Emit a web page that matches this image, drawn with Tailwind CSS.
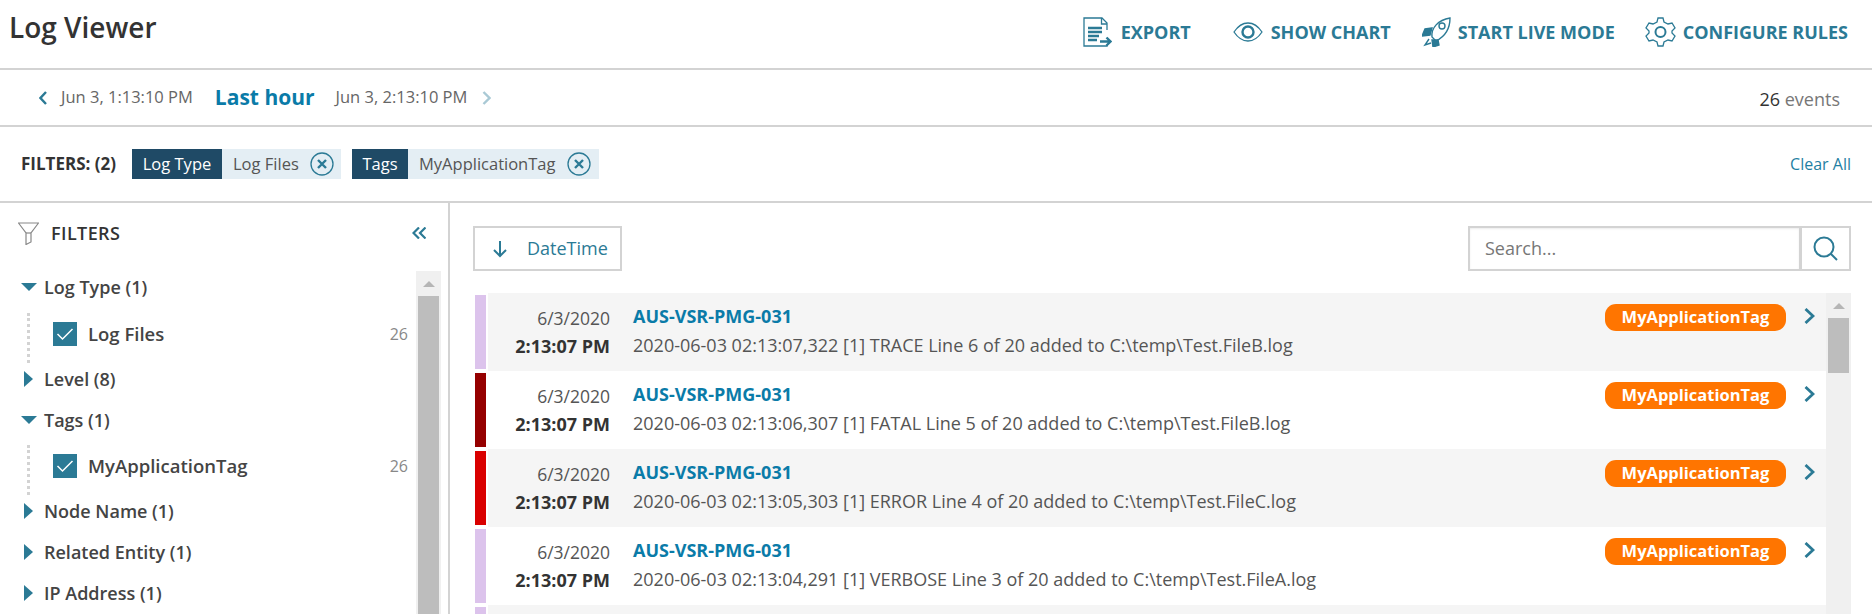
<!DOCTYPE html>
<html lang="en">
<head>
<meta charset="UTF-8">
<title>Log Viewer</title>
<script src="https://cdn.jsdelivr.net/npm/@tailwindcss/browser@4"></script>
</head>
<body class="bg-white font-['Open_Sans',sans-serif] text-[#333] h-[614px] w-[1872px] overflow-hidden">

<!-- Title bar -->
<header class="h-[70px] border-b-2 border-[#d3d3d3] flex justify-between pl-[9px] pr-[24px]">
  <h1 class="text-[28px] leading-[36px] mt-[9px] font-semibold text-[#333]">Log Viewer</h1>
  <nav class="flex items-start pt-[17px] text-[#2b7a95] text-[18px] font-bold leading-[30px]">
    <a class="flex items-center whitespace-nowrap">
      <svg class="w-[29px] h-[30px] mr-[9px]" viewBox="0 0 29 30" fill="none" stroke="#2b7a95" stroke-width="1.300"><path d="M24 13V6l-5-5H1v28h23v-1"/><path d="M18.500 1v6h5.500"/><path d="M5 11h14M5 15h14M5 19h11M5 23h9" stroke-width="2.400"/><path d="M17 24.500h10M23.500 20.500l4 4-4 4" stroke-width="2.400"/></svg>
      EXPORT</a>
    <a class="flex items-center ml-[42px] whitespace-nowrap">
      <svg class="w-[30px] h-[30px] mr-[8px]" viewBox="0 0 30 30" fill="none" stroke="#2b7a95" stroke-width="1.300"><path d="M1 15c4-6 8-9 14-9s10 3 14 9c-4 6-8 9-14 9S5 21 1 15z"/><circle cx="15" cy="15" r="5.500" stroke-width="2.400"/></svg>
      SHOW CHART</a>
    <a class="flex items-center ml-[31px] whitespace-nowrap">
      <svg class="w-[29px] h-[30px] mr-[7px]" viewBox="0 0 29 30" fill="none" stroke="#2b7a95" stroke-width="1.400"><path d="M10 20C9 11 16 3 28 1c0 11-6 19-14 23z"/><circle cx="20" cy="9" r="3"/><path d="M10 11l-7 1-3 7 8-1z" fill="#2b7a95"/><path d="M16 23l1 5-6 2-1-7z" fill="#2b7a95"/><path d="M7 22l-4 6 6-2"/></svg>
      START LIVE MODE</a>
    <a class="flex items-center ml-[30px] whitespace-nowrap">
      <svg class="w-[31px] h-[30px] mr-[7px]" viewBox="0 0 31 30" fill="none" stroke="#2b7a95" stroke-width="1.300"><path d="M13 1h5l1 4 4 2 4-1 3 5-3 3v2l3 3-3 5-4-1-4 2-1 4h-5l-1-4-4-2-4 1-3-5 3-3v-2L1 11l3-5 4 1 4-2z"/><circle cx="15.500" cy="15" r="5" stroke-width="2"/></svg>
      CONFIGURE RULES</a>
  </nav>
</header>

<!-- Time range -->
<div class="h-[57px] border-b-2 border-[#d3d3d3] flex items-center pl-[39px] pr-[32px] whitespace-nowrap">
  <svg class="w-[8px] h-[14px] mr-[14px]" viewBox="0 0 8 14" fill="none" stroke="#2b7a95" stroke-width="2.400"><path d="M7 1L1.500 7 7 13"/></svg>
  <span class="text-[16.500px] text-[#666]">Jun 3, 1:13:10 PM</span>
  <span class="text-[21px] font-bold text-[#0a7ba8] ml-[22px]">Last hour</span>
  <span class="text-[16.500px] text-[#666] ml-[21px]">Jun 3, 2:13:10 PM</span>
  <svg class="w-[9px] h-[14px] ml-[15px]" viewBox="0 0 9 14" fill="none" stroke="#a9c9d5" stroke-width="2.400"><path d="M1.500 1L7.500 7l-6 6"/></svg>
  <span class="ml-auto mt-[3px] text-[18px] text-[#777]"><span class="text-[#333]">26</span> events</span>
</div>

<!-- Active filters -->
<div class="h-[76px] border-b-2 border-[#d3d3d3] flex items-center pl-[21px] pr-[21px] text-[16.500px] whitespace-nowrap">
  <span class="font-bold text-[17px] text-[#333] w-[111px]">FILTERS: (2)</span>
  <div class="flex h-[30px] items-center bg-[#e4eef4] w-[209px]">
    <span class="bg-[#1f4a66] text-white h-full w-[90px] text-center leading-[30px]">Log Type</span>
    <span class="text-[#555] ml-[11px] w-[77px]">Log Files</span>
    <svg class="w-[24px] h-[24px]" viewBox="0 0 24 24" fill="none" stroke="#2b7a95"><circle cx="12" cy="12" r="11" stroke-width="1.300"/><path d="M8 8l8 8M16 8l-8 8" stroke-width="2.400"/></svg>
  </div>
  <div class="flex h-[30px] items-center bg-[#e4eef4] ml-[11px] w-[247px]">
    <span class="bg-[#1f4a66] text-white h-full w-[56px] text-center leading-[30px]">Tags</span>
    <span class="text-[#555] ml-[11px] w-[148px]">MyApplicationTag</span>
    <svg class="w-[24px] h-[24px]" viewBox="0 0 24 24" fill="none" stroke="#2b7a95"><circle cx="12" cy="12" r="11" stroke-width="1.300"/><path d="M8 8l8 8M16 8l-8 8" stroke-width="2.400"/></svg>
  </div>
  <a class="ml-auto text-[16px] text-[#1f7fa3]">Clear All</a>
</div>

<div class="flex h-[411px] overflow-hidden">
  <!-- Filter sidebar -->
  <aside class="w-[450px] shrink-0 border-r-2 border-[#d3d3d3] relative">
    <div class="flex items-center h-[60px] pl-[18px] pr-[22px]">
      <svg class="w-[21px] h-[23px] mr-[12px]" viewBox="0 0 21 23" fill="none" stroke="#888" stroke-width="1.200"><path d="M0.500 1h20l-7.500 10v9l-5 2.500V11z"/><path d="M8 11h5"/></svg>
      <span class="font-semibold text-[18px] tracking-[0.4px] text-[#333]">FILTERS</span>
      <svg class="w-[14px] h-[12px] ml-auto" viewBox="0 0 14 12" fill="none" stroke="#2b7a95" stroke-width="2.200"><path d="M7 .5L1.500 6 7 11.500M13.500 .5L8 6l5.500 5.500"/></svg>
    </div>
    <div class="absolute left-[416px] top-[68px] w-[25px] h-[343px] bg-[#f0f0f0] flex flex-col items-center">
      <span class="w-0 h-0 mt-[10px] border-x-[6px] border-x-transparent border-b-[6px] border-b-[#b5b5b5]"></span>
      <span class="w-[21px] grow mt-[9px] bg-[#bdbdbd]"></span>
    </div>
    <ul class="pl-[21px] text-[18px] font-semibold text-[#444] leading-[24px] pt-[3px] whitespace-nowrap">
      <li class="flex items-center h-[41px]"><span class="w-0 h-0 border-x-[8px] border-x-transparent border-t-[8px] border-t-[#2b7a95] mr-[7px]"></span>Log Type (1)</li>
      <li class="relative flex items-center h-[49px] pl-[32px] w-[387px] mt-[2px] text-[18.500px]">
        <span class="absolute left-[6px] top-[4px] -bottom-[5px] border-l-[3px] border-dotted border-[#d3d3d3]"></span>
        <span class="w-[24px] h-[24px] bg-[#2b7a95] flex items-center justify-center mr-[11px]"><svg class="w-[18px] h-[14px]" viewBox="0 0 18 14" fill="none" stroke="white" stroke-width="1.500"><path d="M1.500 7l5 5 10-10"/></svg></span>
        Log Files<span class="ml-auto font-normal text-[#888] text-[16px]">26</span></li>
      <li class="flex items-center h-[41px]"><span class="w-0 h-0 ml-[3px] border-y-[8px] border-y-transparent border-l-[9px] border-l-[#2b7a95] mr-[11px]"></span>Level (8)</li>
      <li class="flex items-center h-[41px]"><span class="w-0 h-0 border-x-[8px] border-x-transparent border-t-[8px] border-t-[#2b7a95] mr-[7px]"></span>Tags (1)</li>
      <li class="relative flex items-center h-[49px] pl-[32px] w-[387px] mt-[1px] text-[18.500px]">
        <span class="absolute left-[6px] top-[4px] -bottom-[5px] border-l-[3px] border-dotted border-[#d3d3d3]"></span>
        <span class="w-[24px] h-[24px] bg-[#2b7a95] flex items-center justify-center mr-[11px]"><svg class="w-[18px] h-[14px]" viewBox="0 0 18 14" fill="none" stroke="white" stroke-width="1.500"><path d="M1.500 7l5 5 10-10"/></svg></span>
        MyApplicationTag<span class="ml-auto font-normal text-[#888] text-[16px]">26</span></li>
      <li class="flex items-center h-[41px]"><span class="w-0 h-0 ml-[3px] border-y-[8px] border-y-transparent border-l-[9px] border-l-[#2b7a95] mr-[11px]"></span>Node Name (1)</li>
      <li class="flex items-center h-[41px]"><span class="w-0 h-0 ml-[3px] border-y-[8px] border-y-transparent border-l-[9px] border-l-[#2b7a95] mr-[11px]"></span>Related Entity (1)</li>
      <li class="flex items-center h-[41px]"><span class="w-0 h-0 ml-[3px] border-y-[8px] border-y-transparent border-l-[9px] border-l-[#2b7a95] mr-[11px]"></span>IP Address (1)</li>
    </ul>
  </aside>

  <!-- Results -->
  <main class="w-[1422px] pl-[23px] pr-[21px] pt-[23px]">
    <div class="flex justify-between h-[45px]">
      <button class="w-[149px] border-2 border-[#d3d3d3] flex items-center pl-[18px] text-[18px] text-[#2b7a95]">
        <svg class="w-[14px] h-[18px] mr-[20px]" viewBox="0 0 14 18" fill="none" stroke="#2b7a95" stroke-width="2"><path d="M7 1v15M1 10l6 6 6-6"/></svg>
        DateTime</button>
      <div class="flex w-[383px] border-2 border-[#d3d3d3]">
        <div class="grow text-[18px] text-[#777] pl-[15px] leading-[41px] border-r-[3px] border-[#d3d3d3] shadow-[inset_0_1px_2px_rgba(0,0,0,0.08)]">Search...</div>
        <div class="w-[47px] flex items-center justify-center"><svg class="w-[25px] h-[25px]" viewBox="0 0 25 25" fill="none" stroke="#2b7a95" stroke-width="2"><circle cx="11" cy="11" r="9.500"/><path d="M18 18l6 6"/></svg></div>
      </div>
    </div>

    <div class="flex mt-[22px] h-[321px] overflow-hidden">
      <div class="w-[1353px]">
        <!-- rows -->
        <div class="flex h-[78px] pl-[2px]">
          <span class="w-[11px] my-[2px] bg-[#dcc3ec]"></span>
          <div class="grow flex ml-[2px] bg-[#f5f5f5]">
            <div class="w-[122px] text-right pt-[11px] text-[17.500px] text-[#555] leading-[28px]">6/3/2020<div class="font-bold text-[#333] text-[18px]">2:13:07 PM</div></div>
            <div class="ml-[23px] pt-[9px] text-[18px] text-[#555] leading-[28px]"><div class="font-bold text-[#0a7ba8] leading-[29px]">AUS-VSR-PMG-031</div>2020-06-03 02:13:07,322 [1] TRACE Line 6 of 20 added to C:\temp\Test.FileB.log</div>
            <div class="ml-auto mr-[11px] mt-[11px] flex items-start h-[27px]">
              <span class="bg-[#ff7500] text-white font-bold text-[16.500px] rounded-[11px] w-[181px] text-center leading-[26px] h-[27px]">MyApplicationTag</span>
              <svg class="w-[11px] h-[16px] ml-[18px] mt-[4px]" viewBox="0 0 11 16" fill="none" stroke="#2b7a95" stroke-width="2.800"><path d="M1.500 1L9 8l-7.500 7"/></svg>
            </div>
          </div>
        </div>
        <div class="flex h-[78px] pl-[2px]">
          <span class="w-[11px] my-[2px] bg-[#950000]"></span>
          <div class="grow flex ml-[2px] bg-white">
            <div class="w-[122px] text-right pt-[11px] text-[17.500px] text-[#555] leading-[28px]">6/3/2020<div class="font-bold text-[#333] text-[18px]">2:13:07 PM</div></div>
            <div class="ml-[23px] pt-[9px] text-[18px] text-[#555] leading-[28px]"><div class="font-bold text-[#0a7ba8] leading-[29px]">AUS-VSR-PMG-031</div>2020-06-03 02:13:06,307 [1] FATAL Line 5 of 20 added to C:\temp\Test.FileB.log</div>
            <div class="ml-auto mr-[11px] mt-[11px] flex items-start h-[27px]">
              <span class="bg-[#ff7500] text-white font-bold text-[16.500px] rounded-[11px] w-[181px] text-center leading-[26px] h-[27px]">MyApplicationTag</span>
              <svg class="w-[11px] h-[16px] ml-[18px] mt-[4px]" viewBox="0 0 11 16" fill="none" stroke="#2b7a95" stroke-width="2.800"><path d="M1.500 1L9 8l-7.500 7"/></svg>
            </div>
          </div>
        </div>
        <div class="flex h-[78px] pl-[2px]">
          <span class="w-[11px] my-[2px] bg-[#d90000]"></span>
          <div class="grow flex ml-[2px] bg-[#f5f5f5]">
            <div class="w-[122px] text-right pt-[11px] text-[17.500px] text-[#555] leading-[28px]">6/3/2020<div class="font-bold text-[#333] text-[18px]">2:13:07 PM</div></div>
            <div class="ml-[23px] pt-[9px] text-[18px] text-[#555] leading-[28px]"><div class="font-bold text-[#0a7ba8] leading-[29px]">AUS-VSR-PMG-031</div>2020-06-03 02:13:05,303 [1] ERROR Line 4 of 20 added to C:\temp\Test.FileC.log</div>
            <div class="ml-auto mr-[11px] mt-[11px] flex items-start h-[27px]">
              <span class="bg-[#ff7500] text-white font-bold text-[16.500px] rounded-[11px] w-[181px] text-center leading-[26px] h-[27px]">MyApplicationTag</span>
              <svg class="w-[11px] h-[16px] ml-[18px] mt-[4px]" viewBox="0 0 11 16" fill="none" stroke="#2b7a95" stroke-width="2.800"><path d="M1.500 1L9 8l-7.500 7"/></svg>
            </div>
          </div>
        </div>
        <div class="flex h-[78px] pl-[2px]">
          <span class="w-[11px] my-[2px] bg-[#dcc3ec]"></span>
          <div class="grow flex ml-[2px] bg-white">
            <div class="w-[122px] text-right pt-[11px] text-[17.500px] text-[#555] leading-[28px]">6/3/2020<div class="font-bold text-[#333] text-[18px]">2:13:07 PM</div></div>
            <div class="ml-[23px] pt-[9px] text-[18px] text-[#555] leading-[28px]"><div class="font-bold text-[#0a7ba8] leading-[29px]">AUS-VSR-PMG-031</div>2020-06-03 02:13:04,291 [1] VERBOSE Line 3 of 20 added to C:\temp\Test.FileA.log</div>
            <div class="ml-auto mr-[11px] mt-[11px] flex items-start h-[27px]">
              <span class="bg-[#ff7500] text-white font-bold text-[16.500px] rounded-[11px] w-[181px] text-center leading-[26px] h-[27px]">MyApplicationTag</span>
              <svg class="w-[11px] h-[16px] ml-[18px] mt-[4px]" viewBox="0 0 11 16" fill="none" stroke="#2b7a95" stroke-width="2.800"><path d="M1.500 1L9 8l-7.500 7"/></svg>
            </div>
          </div>
        </div>
        <div class="flex h-[78px] pl-[2px]">
          <span class="w-[11px] my-[2px] bg-[#dcc3ec]"></span>
          <div class="grow ml-[2px] bg-[#f5f5f5]"></div>
        </div>
      </div>
      <div class="w-[25px] bg-[#f0f0f0] flex flex-col items-center">
        <span class="w-0 h-0 mt-[10px] border-x-[6px] border-x-transparent border-b-[6px] border-b-[#b5b5b5]"></span>
        <span class="w-[21px] h-[55px] mt-[9px] bg-[#bdbdbd]"></span>
      </div>
    </div>
  </main>
</div>
</body>
</html>
